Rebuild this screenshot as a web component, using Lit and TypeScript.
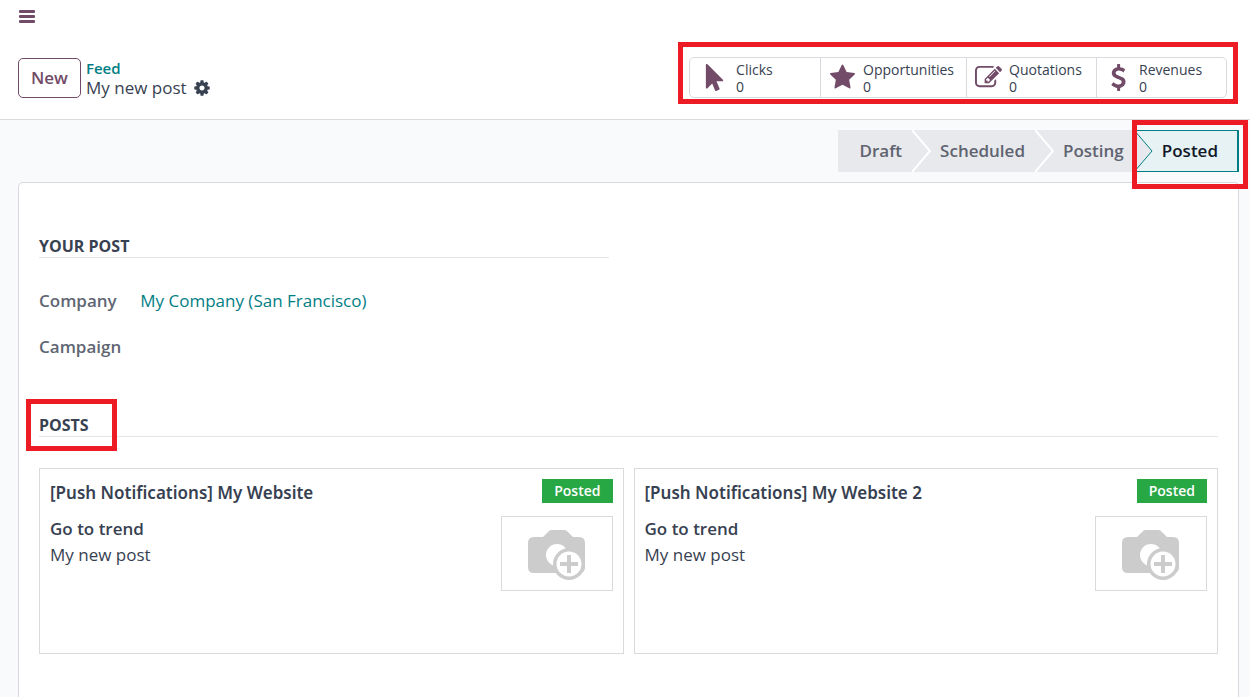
import { LitElement, html, css, svg } from "lit";
import { customElement, property } from "lit/decorators.js";

const ICONS: Record<string, string> = {
  pointer:
    "M1389 1043q31 30 14 69-17 40-59 40h-382l201 476q10 25 0 49t-34 35l-177 75q-25 10-49 0t-35-34l-191-452-312 312q-19 19-45 19-12 0-24-5-40-17-40-59v-1504q0-42 40-59 12-5 24-5 27 0 45 19z",
  star: "M1728 647q0 22-26 48l-363 354 86 500q1 7 1 20 0 21-10.5 35.5t-30.5 14.5q-19 0-40-12l-449-236-449 236q-22 12-40 12-21 0-31.5-14.5t-10.5-35.5q0-6 2-20l86-500-364-354q-25-27-25-48 0-37 56-46l502-73 225-455q19-41 49-41t49 41l225 455 502 73q56 9 56 46z",
  edit: "M888 1184l116-116-152-152-116 116v56h96v96h56zm440-720q-16-16-33 1l-350 350q-17 17-1 33t33-1l350-350q17-17 1-33zm80 594v190q0 119-84.500 203.500t-203.500 84.500h-832q-119 0-203.500-84.500t-84.500-203.500v-832q0-119 84.500-203.500t203.500-84.500h832q63 0 117 25 15 7 18 23 3 17-9 29l-49 49q-14 14-32 8-23-6-45-6h-832q-66 0-113 47t-47 113v832q0 66 47 113t113 47h832q66 0 113-47t47-113v-126q0-13 9-22l64-64q15-15 35-7t20 29zm-96-738l288 288-672 672h-288v-288zm444 132l-92 92-288-288 92-92q28-28 68-28t68 28l152 152q28 28 28 68t-28 68z",
  dollar:
    "M1362 1185q0 153-99.500 263.500t-258.500 136.500v175q0 14-9 23t-23 9h-135q-13 0-22.500-9.500t-9.500-22.500v-175q-66-9-127.500-31t-101.500-44.500-74-48-46.500-37.500-17.500-18q-17-21-2-41l103-135q7-10 23-12 15-2 24 9l2 2q113 99 243 125 37 8 74 8 81 0 142.500-43t61.500-122q0-28-15-53t-33.500-42-58.500-37.500-66-32-80-32.500q-39-16-61.500-25t-61.500-26.500-62.500-31-56.500-35.500-53.500-42.500-43.500-49-35.500-58-21-66.500-8.500-78q0-138 98-242t255-134v-180q0-13 9.500-22.500t22.500-9.500h135q14 0 23 9t9 23v176q57 6 110.500 23t87 33.500 63.500 37.500 39 29 15 14q17 18 5 38l-81 146q-8 15-23 16-14 3-27-7-3-3-14.500-12t-39-26.500-58.500-32-74.500-26-85.500-11.500q-95 0-155 43t-60 111q0 26 8.500 48t29.500 41.500 39.500 33 56 31 60.500 27 70 27.500q53 20 81 31.500t76 35 75.500 42.500 62 50 53 63.500 31.500 76.500 13 94z",
  cog: "M1152 896q0-106-75-181t-181-75-181 75-75 181 75 181 181 75 181-75 75-181zm512-109v222q0 12-8 23t-20 13l-185 28q-19 54-39 91 35 50 107 138 10 12 10 25t-9 23q-27 37-99 108t-94 71q-12 0-26-9l-138-108q-44 23-91 38-16 136-29 186-7 28-36 28h-222q-14 0-24.500-8.500t-11.500-21.500l-28-184q-49-16-90-37l-141 107q-10 9-25 9-14 0-25-11-126-114-165-168-7-10-7-23 0-12 8-23 15-21 51-66.500t54-70.500q-27-50-41-99l-183-27q-13-2-21-12.500t-8-23.500v-222q0-12 8-23t19-13l186-28q14-46 39-92-40-57-107-138-10-12-10-24 0-10 9-23 26-36 98.500-107.500t94.500-71.500q13 0 26 10l138 107q44-23 91-38 16-136 29-186 7-28 36-28h222q14 0 24.500 8.500t11.500 21.500l28 184q49 16 90 37l142-107q9-9 24-9 13 0 25 10 129 119 165 170 7 8 7 22 0 12-8 23-15 21-51 66.500t-54 70.500q26 50 41 98l183 28q13 2 21 12.500t8 23.500z",
};

const icon = (name: string) => html`
  <svg class="icon" viewBox="0 0 1792 1792" aria-hidden="true">${svg`<path d=${ICONS[name]} />`}</svg>
`;

const STATS = [
  { icon: "pointer", label: "Clicks", value: 0 },
  { icon: "star", label: "Opportunities", value: 0 },
  { icon: "edit", label: "Quotations", value: 0 },
  { icon: "dollar", label: "Revenues", value: 0 },
];

const STAGES = ["Draft", "Scheduled", "Posting", "Posted"];
const CURRENT_STAGE = "Posted";

const POSTS = ["[Push Notifications] My Website", "[Push Notifications] My Website 2"];

@customElement("post-card")
class PostCard extends LitElement {
  @property() heading = "";

  static styles = css`
    :host {
      display: block;
      box-sizing: border-box;
      min-height: 186px;
      padding: 10px;
      border: 1px solid #d8dadd;
      color: #374151;
    }
    .top,
    .content {
      display: flex;
      justify-content: space-between;
      gap: 12px;
    }
    .title {
      margin: 0;
      padding-top: 2px;
      font-family: "Noto Sans", "Open Sans", sans-serif;
      font-size: 17px;
      font-weight: 600;
      line-height: 24px;
    }
    .badge {
      align-self: flex-start;
      padding: 0 12px;
      background: #28a745;
      color: #fff;
      font-size: 14px;
      font-weight: 600;
      line-height: 24px;
    }
    .content {
      margin-top: 11px;
    }
    .text {
      font-size: 17px;
      line-height: 26px;
    }
    .trend {
      font-weight: 600;
    }
    .thumb {
      box-sizing: border-box;
      display: flex;
      align-items: center;
      justify-content: center;
      width: 112px;
      height: 75px;
      border: 1px solid #d8dadd;
    }
    .camera {
      width: 58px;
      height: 50px;
      padding-top: 3px;
    }
  `;

  render() {
    return html`
      <div class="top">
        <h3 class="title">${this.heading}</h3>
        <span class="badge">Posted</span>
      </div>
      <div class="content">
        <div class="text">
          <div class="trend">Go to trend</div>
          <div>My new post</div>
        </div>
        <div class="thumb">
          <svg class="camera" viewBox="0 0 58 50" role="img" aria-label="No picture">
            <path
              fill="#ccc"
              d="M6 7h9l6-6q1-1 3-1h12q2 0 3 1l6 6h6q6 0 6 6v24q0 6-6 6H6q-6 0-6-6V13q0-6 6-6z"
            />
            <circle cx="29" cy="25" r="11" fill="#fff" />
            <circle cx="41" cy="34" r="16" fill="#ccc" />
            <circle cx="41" cy="34" r="12.500" fill="#fff" />
            <path d="M41 25v18M32 34h18" fill="none" stroke="#ccc" stroke-width="4" />
          </svg>
        </div>
      </div>
    `;
  }
}

@customElement("app-root")
class AppRoot extends LitElement {
  static styles = css`
    :host {
      display: flex;
      flex-direction: column;
      min-height: 100vh;
      background: #f9fafb;
      color: #374151;
      font-family: "Open Sans", "Noto Sans", sans-serif;
      font-size: 17px;
      line-height: 24px;
    }
    button {
      font: inherit;
      color: inherit;
      background: none;
      border: 0;
      padding: 0;
      cursor: pointer;
    }
    a {
      color: #017e84;
      text-decoration: none;
    }
    .icon {
      display: block;
      fill: currentColor;
    }
    .header {
      background: #fff;
      border-bottom: 1px solid #d8dadd;
      padding: 9px 23px 21px 18px;
    }
    .menu {
      display: block;
      color: #714b67;
    }
    .menu-icon {
      display: block;
      width: 18px;
      height: 15px;
      fill: currentColor;
    }
    .panel {
      display: flex;
      align-items: center;
      justify-content: space-between;
      margin-top: 33px;
    }
    .left {
      display: flex;
      align-items: center;
      gap: 5px;
    }
    .new {
      height: 40px;
      padding: 0 12px;
      border: 1px solid #714b67;
      border-radius: 5px;
      color: #714b67;
      font-weight: 600;
    }
    .crumbs {
      line-height: 20px;
    }
    .feed {
      font-size: 15px;
      font-weight: 600;
    }
    .current {
      display: flex;
      align-items: center;
      gap: 6px;
    }
    .cog .icon {
      width: 18px;
      height: 18px;
    }
    .stats {
      position: relative;
      display: flex;
      border: 1px solid #d8dadd;
      border-radius: 5px;
    }
    .stat {
      box-sizing: border-box;
      display: flex;
      align-items: center;
      gap: 7px;
      min-width: 130px;
      height: 39px;
      padding: 0 12px 0 8px;
      text-align: left;
      font-size: 14px;
      line-height: 17px;
    }
    .stat:first-of-type {
      padding-left: 12px;
    }
    .stat + .stat {
      border-left: 1px solid #d8dadd;
    }
    .stat .icon {
      width: 27px;
      height: 27px;
      color: #714b67;
    }
    .stat-text {
      display: block;
    }
    .stat-value {
      display: block;
      font-weight: 500;
    }
    .mark {
      position: absolute;
      border: 5px solid #ed1c24;
      pointer-events: none;
    }
    .mark-stats {
      inset: -16px -12px -7px;
    }
    .mark-stage {
      inset: -11px -11px -18px -2px;
    }
    .mark-posts {
      inset: -15px -28px -15px -13px;
    }
    .status {
      display: flex;
      justify-content: flex-end;
      padding: 10px 11px;
    }
    .stage {
      position: relative;
      display: flex;
      align-items: center;
      height: 42px;
      padding-right: 10px;
      background: #e7e9ed;
      color: #5f636f;
      font-weight: 600;
    }
    .stage:first-child {
      padding-left: 22px;
    }
    .chevron {
      width: 19px;
      height: 42px;
      margin-right: 9px;
      fill: #e7e9ed;
      stroke: #fff;
      stroke-width: 2;
    }
    .active {
      box-sizing: border-box;
      border: solid #017e84;
      border-width: 1px 2px 1px 0;
      padding-right: 19px;
      background: #e6f2f3;
      color: #111827;
    }
    .active .chevron {
      stroke: #017e84;
      stroke-width: 1;
    }
    .sheet {
      flex: 1;
      margin: 0 11px 0 18px;
      padding: 52px 20px 43px;
      background: #fff;
      border: 1px solid #d8dadd;
      border-bottom: 0;
      border-radius: 5px 5px 0 0;
    }
    .columns {
      display: grid;
      grid-template-columns: 1fr 1fr;
      gap: 40px;
    }
    .section {
      margin: 0;
      border-bottom: 1px solid #e3e5e8;
      font-size: 16px;
      font-weight: 700;
      line-height: 22px;
    }
    .section-label {
      position: relative;
    }
    .fields {
      display: grid;
      grid-template-columns: auto 1fr;
      gap: 22px 19px;
      margin: 31px 0 0;
    }
    .name {
      color: #5f6673;
      font-weight: 600;
    }
    .value {
      margin: 0;
    }
    .posts {
      margin-top: 55px;
    }
    .cards {
      display: grid;
      grid-template-columns: 1fr 1fr;
      gap: 10px;
      margin-top: 31px;
    }
  `;

  render() {
    return html`
      <header class="header">
        <button class="menu" aria-label="Menu">
          <svg class="menu-icon" viewBox="0 0 18 15" aria-hidden="true">
            <rect x="1" y="1" width="16" height="3" rx="1" />
            <rect x="1" y="6" width="16" height="3" rx="1" />
            <rect x="1" y="11" width="16" height="3" rx="1" />
          </svg>
        </button>
        <div class="panel">
          <div class="left">
            <button class="new">New</button>
            <div class="crumbs">
              <a class="feed" href="#feed">Feed</a>
              <div class="current">
                <span>My new post</span>
                <button class="cog" aria-label="Actions">${icon("cog")}</button>
              </div>
            </div>
          </div>
          <div class="stats">
            ${STATS.map(
              (s) => html`
                <button class="stat">
                  ${icon(s.icon)}
                  <span class="stat-text">
                    ${s.label}
                    <span class="stat-value">${s.value}</span>
                  </span>
                </button>
              `
            )}
            <span class="mark mark-stats"></span>
          </div>
        </div>
      </header>

      <div class="status">
        ${STAGES.map((name, i) => {
          const active = name === CURRENT_STAGE;
          return html`
            <button class="stage ${active ? "active" : ""}">
              ${i
                ? html`<svg class="chevron" viewBox="0 0 19 42" aria-hidden="true">
                    <path d="M0 0L18 21L0 42" />
                  </svg>`
                : ""}
              <span>${name}</span>
              ${active ? html`<span class="mark mark-stage"></span>` : ""}
            </button>
          `;
        })}
      </div>

      <main class="sheet">
        <div class="columns">
          <section>
            <h2 class="section">YOUR POST</h2>
            <dl class="fields">
              <dt class="name">Company</dt>
              <dd class="value"><a href="#company">My Company (San Francisco)</a></dd>
              <dt class="name">Campaign</dt>
              <dd class="value"></dd>
            </dl>
          </section>
        </div>
        <section class="posts">
          <h2 class="section">
            <span class="section-label">POSTS<span class="mark mark-posts"></span></span>
          </h2>
          <div class="cards">
            ${POSTS.map((heading) => html`<post-card .heading=${heading}></post-card>`)}
          </div>
        </section>
      </main>
    `;
  }
}
